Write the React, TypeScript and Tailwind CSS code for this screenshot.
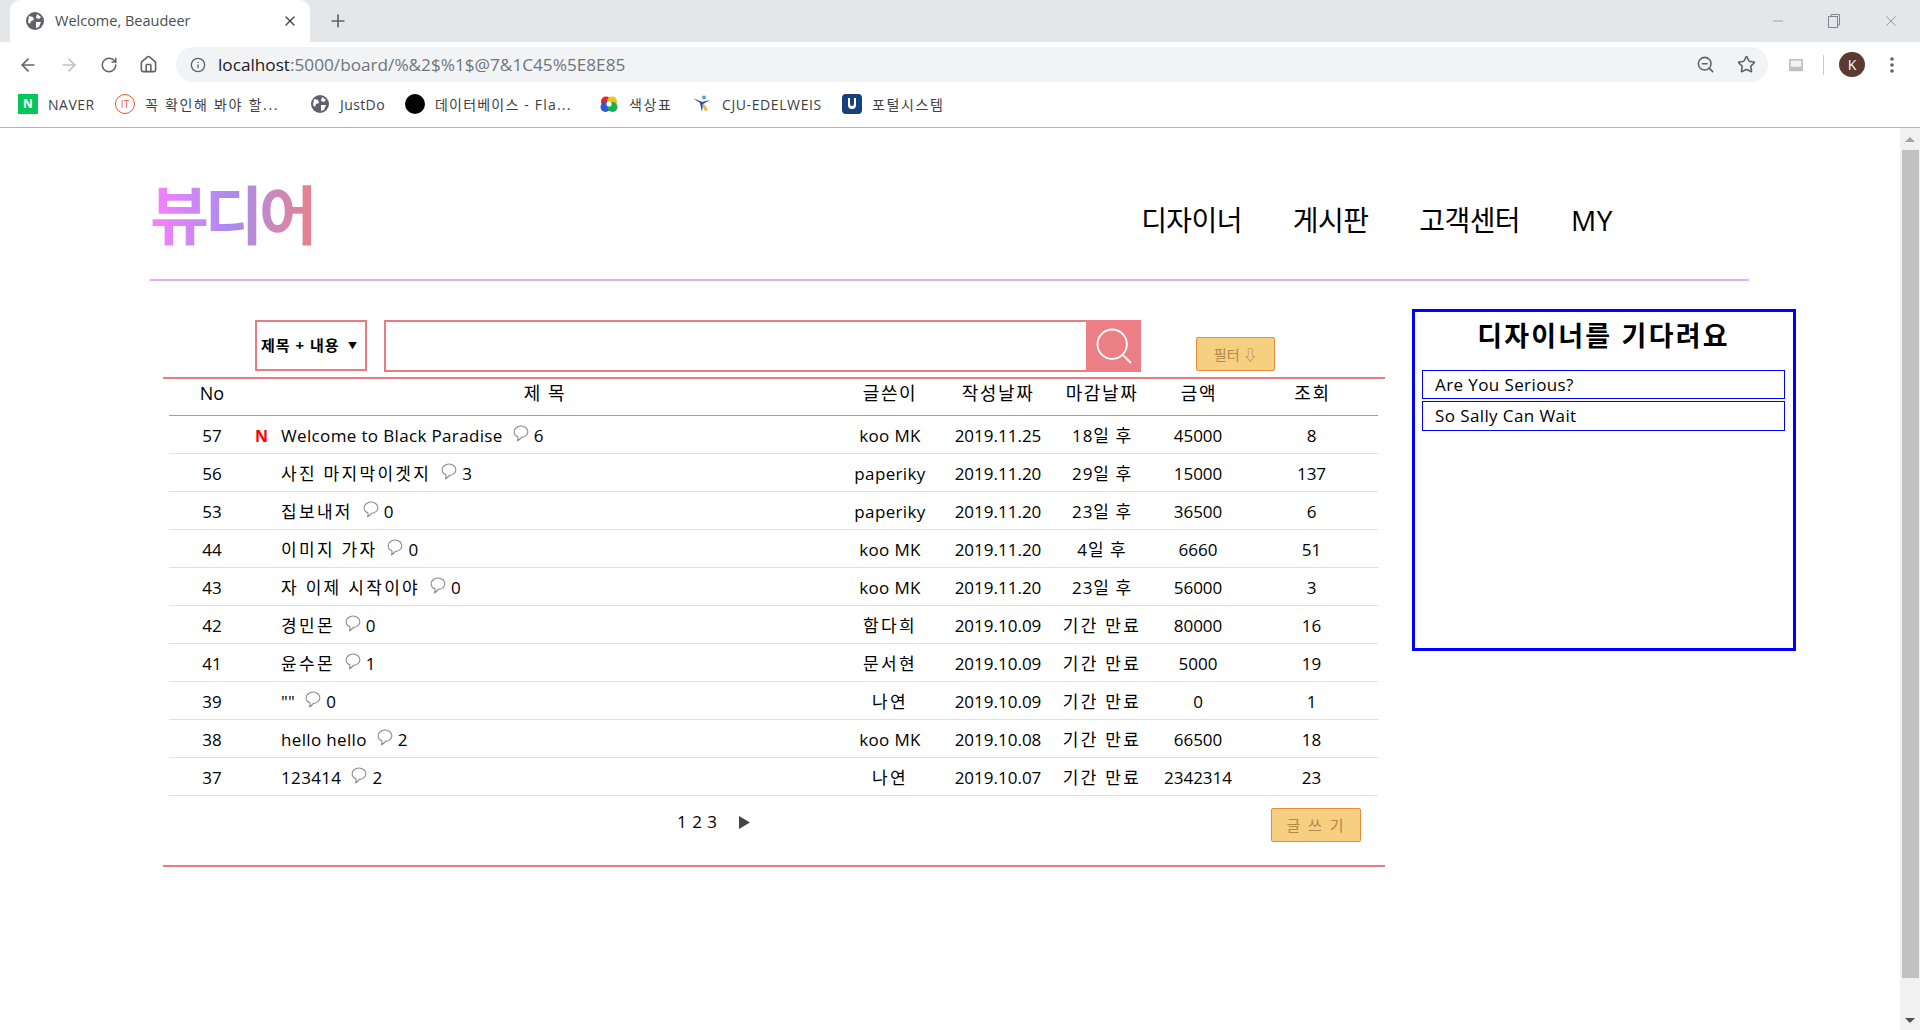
import React from "react";
import { ArrowLeft, ArrowRight, RotateCw, Home, Info, ZoomOut, Star, X, Plus, Minus, Search } from "lucide-react";

const Globe = ({ c = "#5f6368", s = 18 }: { c?: string; s?: number }) => (
  <svg width={s} height={s} viewBox="0 0 18 18" className="shrink-0">
    <circle cx="9" cy="9" r="9" fill={c} />
    <path d="M3 4l4 1 1 3-3 1-1 3-2-2zM11 2l4 3-2 2-3-1zM10 10l5 0-2 5-3 1z" fill="#fff" />
  </svg>
);

const rows = [
  ["57", true, "Welcome to Black Paradise", "6", "koo MK", "2019.11.25", "18일 후", "45000", "8"],
  ["56", false, "사진 마지막이겟지", "3", "paperiky", "2019.11.20", "29일 후", "15000", "137"],
  ["53", false, "집보내저", "0", "paperiky", "2019.11.20", "23일 후", "36500", "6"],
  ["44", false, "이미지 가자", "0", "koo MK", "2019.11.20", "4일 후", "6660", "51"],
  ["43", false, "자 이제 시작이야", "0", "koo MK", "2019.11.20", "23일 후", "56000", "3"],
  ["42", false, "경민몬", "0", "함다희", "2019.10.09", "기간 만료", "80000", "16"],
  ["41", false, "윤수몬", "1", "문서현", "2019.10.09", "기간 만료", "5000", "19"],
  ["39", false, "\"\"", "0", "나연", "2019.10.09", "기간 만료", "0", "1"],
  ["38", false, "hello hello", "2", "koo MK", "2019.10.08", "기간 만료", "66500", "18"],
  ["37", false, "123414", "2", "나연", "2019.10.07", "기간 만료", "2342314", "23"],
] as const;

const track = (s: string) =>
  /^[\uac00-\ud7a3 ]+$/.test(s) ? "tracking-[2.3px]" : /[\uac00-\ud7a3]/.test(s) ? "tracking-[1px]" : "tracking-[0.35px]";

const Bubble = () => (
  <svg width="16" height="18" viewBox="0 0 15 17" className="shrink-0 mb-[4px] ml-[10px] mr-[5px]">
    <path d="M7.5 1C3.9 1 1 3.4 1 6.4c0 2.2 1.5 4 3.6 4.8.2 1.2.1 2.4-.3 3.6 1.6-.7 2.8-1.9 3.6-3.1 3.3-.2 6.1-2.5 6.1-5.3C14 3.4 11.1 1 7.5 1z" fill="none" stroke="#8a8a8a" strokeWidth="1" />
  </svg>
);

const Bookmark = ({ icon, label, w, t }: { icon: React.ReactNode; label: string; w: string; t: string }) => (
  <div className={`flex items-center gap-[10px] ${w}`}>
    <span className="w-[20px] h-[20px] flex items-center justify-center shrink-0">{icon}</span>
    <span className={`text-[14px] text-[#3c4043] whitespace-nowrap ${t}`}>{label}</span>
  </div>
);

export default function App() {
  return (
    <div className="h-[1030px] w-full overflow-hidden flex flex-col bg-white text-black font-['Open_Sans','Noto_Sans_CJK_KR',sans-serif]">
      {/* tab strip */}
      <div className="h-[42px] bg-[#e4e7ea] flex items-end shrink-0">
        <div className="ml-[10px] w-[300px] h-[42px] bg-white rounded-t-[10px] flex items-center pl-[16px] pr-[12px]">
          <Globe />
          <span className="ml-[11px] text-[14.5px] text-[#4a4d51]">Welcome, Beaudeer</span>
          <X size={16} strokeWidth={2} className="ml-auto text-[#45484c]" />
        </div>
        <div className="h-[42px] flex items-center ml-[18px]">
          <Plus size={20} strokeWidth={2} className="text-[#5f6368]" />
        </div>
        <div className="ml-auto h-[42px] flex items-center gap-[41px] pr-[20px] text-[#80868b]">
          <Minus size={16} strokeWidth={1} />
          <svg width="14" height="16" viewBox="0 0 14 16" fill="none" stroke="#80868b" strokeWidth="1"><rect x="1.5" y="3.5" width="9" height="11" /><path d="M4 3V1.5h8.5V12H11" /></svg>
          <X size={18} strokeWidth={1} />
        </div>
      </div>
      {/* toolbar */}
      <div className="h-[45px] flex items-center shrink-0 text-[#5f6368]">
        <div className="flex items-center gap-[21px] pl-[18px] w-[176px]">
          <ArrowLeft size={20} strokeWidth={2} />
          <ArrowRight size={20} strokeWidth={2} className="text-[#bdc1c6]" />
          <RotateCw size={18} strokeWidth={2} />
          <Home size={19} strokeWidth={2} />
        </div>
        <div className="w-[1592px] h-[35px] rounded-full bg-[#f1f3f4] flex items-center pl-[14px] pr-[12px]">
          <Info size={16} strokeWidth={2} />
          <span className="ml-[12px] text-[17.2px] text-[#202124]">localhost<span className="text-[#70757a]">:5000/board/%&amp;2$%1$@7&amp;1C45%5E8E85</span></span>
          <ZoomOut size={19} strokeWidth={2} className="ml-auto" />
          <Star size={19} strokeWidth={2} className="ml-[22px]" />
        </div>
        <svg width="14" height="14" viewBox="0 0 16 14" className="ml-[21px]"><rect width="16" height="14" rx="1" fill="#bdc1c6" /><rect x="2" y="2" width="12" height="7" fill="#f1f3f4" /></svg>
        <div className="w-px h-[20px] bg-[#c8cacd] ml-[20px]" />
        <div className="w-[26px] h-[25px] rounded-full bg-[#5b3a31] text-white text-[14px] flex items-center justify-center ml-[15px]">K</div>
        <svg width="4" height="16" viewBox="0 0 4 16" className="ml-[25px]" fill="#5f6368"><circle cx="2" cy="2" r="1.8" /><circle cx="2" cy="8" r="1.8" /><circle cx="2" cy="14" r="1.8" /></svg>
      </div>
      {/* bookmarks */}
      <div className="h-[41px] pb-[6px] border-b border-[#b5b5b5] flex items-center pl-[18px] shrink-0">
        <Bookmark w="w-[97px]" t="tracking-[0.5px]" label="NAVER" icon={<span className="w-[20px] h-[20px] bg-[#03c75a] text-white text-[12px] font-bold flex items-center justify-center">N</span>} />
        <Bookmark w="w-[195px]" t="tracking-[1.7px]" label="꼭 확인해 봐야 할..." icon={<span className="w-[20px] h-[20px] rounded-full border border-[#e2582f] text-[#e2582f] text-[10px] flex items-center justify-center">IT</span>} />
        <Bookmark w="w-[95px]" t="tracking-[0.4px]" label="JustDo" icon={<Globe />} />
        <Bookmark w="w-[194px]" t="tracking-[1.2px]" label="데이터베이스 - Fla..." icon={<span className="w-[20px] h-[20px] rounded-full bg-black" />} />
        <Bookmark w="w-[93px]" t="tracking-[1.6px]" label="색상표" icon={
          <svg width="18" height="18" viewBox="0 0 18 18"><circle cx="6" cy="6.5" r="5" fill="#e8232a" /><circle cx="12" cy="6.5" r="5" fill="#f2c40f" /><circle cx="5.5" cy="12" r="5" fill="#2d5bd7" /><circle cx="12.5" cy="12" r="5" fill="#18b04a" /><circle cx="9" cy="9" r="2.6" fill="#fff" /></svg>
        } />
        <Bookmark w="w-[150px]" t="tracking-[0.6px]" label="CJU-EDELWEIS" icon={
          <svg width="20" height="20" viewBox="0 0 20 20"><path d="M1 4l7 5 2 9 1-8 7-4-8 2z" fill="#2b4a9a" /><path d="M10 11l3 6 3-1-4-6z" fill="#f0b33a" /><circle cx="12" cy="3.5" r="2" fill="#4aa3e0" /></svg>
        } />
        <Bookmark w="w-[110px]" t="tracking-[1.6px]" label="포털시스템" icon={
          <svg width="20" height="20" viewBox="0 0 20 20"><rect width="20" height="20" rx="4" fill="#17407f" /><path d="M6 4v7a4 4 0 0 0 8 0V4h-2v6a2 2 0 0 1-4 0V4z" fill="#fff" /></svg>
        } />
      </div>

      {/* viewport */}
      <div className="flex-1 flex min-h-0">
        <div className="flex-1 min-w-0">
          {/* site header */}
          <header className="ml-[150px] w-[1599px] h-[153px] border-b-2 border-[#e6aef0] flex items-start justify-between pr-[136px] box-border">
            <div className="mt-[52px] text-[64px] leading-[70px] font-semibold tracking-[-4.5px] bg-linear-to-r from-[#f97ffc] via-[#a78bf0] to-[#e8808a] bg-clip-text text-transparent">뷰디어</div>
            <nav className="mt-[70px] flex gap-[51px] text-[28px] leading-[44px] tracking-[-0.6px]">
              <span>디자이너</span><span>게시판</span><span>고객센터</span><span className="tracking-[0.6px]">MY</span>
            </nav>
          </header>

          <div className="flex">
            {/* board */}
            <section className="ml-[163px] w-[1222px]">
              <div className="h-[98px] border-b-2 border-[#e97c82] box-border pt-[39px] flex items-start pl-[92px]">
                <div className="w-[112px] h-[51px] border-2 border-[#e97c82] flex items-center justify-between pl-[4px] pr-[7px] text-[15px] font-bold tracking-[1px]">
                  <span>제목 + 내용</span><span className="text-[9px]">▼</span>
                </div>
                <div className="ml-[17px] w-[702px] h-[52px] border-2 border-r-0 border-[#e97c82]" />
                <div className="w-[55px] h-[52px] bg-[#ec7f85] flex items-center justify-center">
                  <Search size={44} strokeWidth={1} className="text-white" />
                </div>
                <div className="ml-[55px] mt-[17px] w-[79px] h-[34px] bg-[#f6cf80] border border-[#e88c3a] rounded-[2px] flex items-center justify-center text-[14px] text-[#b0894a]">필터 ⇩</div>
              </div>
              <div className="ml-[6px] w-[1209px]">
                <div className="h-[37px] border-b border-[#e0848a] grid grid-cols-[86px_580px_110px_106px_102px_92px_133px] items-center text-center text-[18px] leading-none pb-[8px] tracking-[1.6px]">
                  <span className="tracking-normal">No</span><span>제 목</span><span>글쓴이</span><span>작성날짜</span><span>마감날짜</span><span>금액</span><span className="pl-[2px]">조회</span>
                </div>
                {rows.map((r) => (
                  <div key={r[0]} className="h-[38px] pt-[2px] border-b border-[#ecd9d9] grid grid-cols-[86px_580px_110px_106px_102px_92px_133px] items-center text-center text-[17px]">
                    <span>{r[0]}</span>
                    <div className="flex items-center text-left">
                      <span className="w-[26px] text-[16px] font-bold text-[#ff0000] leading-none">{r[1] ? "N" : ""}</span>
                      <span className={track(r[2])}>{r[2]}</span>
                      <Bubble />
                      <span>{r[3]}</span>
                    </div>
                    <span className={track(r[4])}>{r[4]}</span><span>{r[5]}</span><span className={track(r[6])}>{r[6]}</span><span className="pr-[2px]">{r[7]}</span><span>{r[8]}</span>
                  </div>
                ))}
              </div>
              <div className="h-[71px] border-b-2 border-[#e97c82] box-border flex items-start pl-[514px]">
                <span className="mt-[13px] text-[17px] leading-[26px] w-[62px] tracking-[0.5px]">1 2 3</span>
                <svg width="11" height="13" viewBox="0 0 11 13" className="mt-[20px]"><path d="M0 0l11 6.5L0 13z" fill="#444" /></svg>
                <div className="ml-[521px] mt-[12px] w-[90px] h-[34px] bg-[#f6cf80] border border-[#e88c3a] rounded-[2px] flex items-center justify-center text-[15px] text-[#b0894a] tracking-[2px]">글 쓰 기</div>
              </div>
            </section>

            {/* side panel */}
            <aside className="ml-[27px] mt-[28px] w-[384px] h-[342px] border-[3px] border-[#0000ff] pl-[7px] pr-[8px] box-border">
              <h2 className="text-center text-[27px] font-bold leading-[38px] mt-[5px] mb-[15px] tracking-[2.2px]">디자이너를 기다려요</h2>
              <div className="h-[29px] border border-[#0000ff] pl-[12px] flex items-center text-[17px] mb-[2px] tracking-[0.4px]">Are You Serious?</div>
              <div className="h-[30px] border border-[#0000ff] pl-[12px] flex items-center text-[17px] tracking-[0.4px]">So Sally Can Wait</div>
            </aside>
          </div>
        </div>

        {/* scrollbar */}
        <div className="w-[20px] bg-[#f1f1f1] flex flex-col items-center shrink-0">
          <svg width="10" height="6" viewBox="0 0 10 6" className="mt-[9px]"><path d="M5 0l5 5H0z" fill="#a3a3a3" /></svg>
          <div className="w-[17px] h-[828px] bg-[#c1c1c1] mt-[7px]" />
          <svg width="10" height="6" viewBox="0 0 10 6" className="mt-[39px]"><path d="M5 6L0 1h10z" fill="#505050" /></svg>
        </div>
      </div>
    </div>
  );
}
